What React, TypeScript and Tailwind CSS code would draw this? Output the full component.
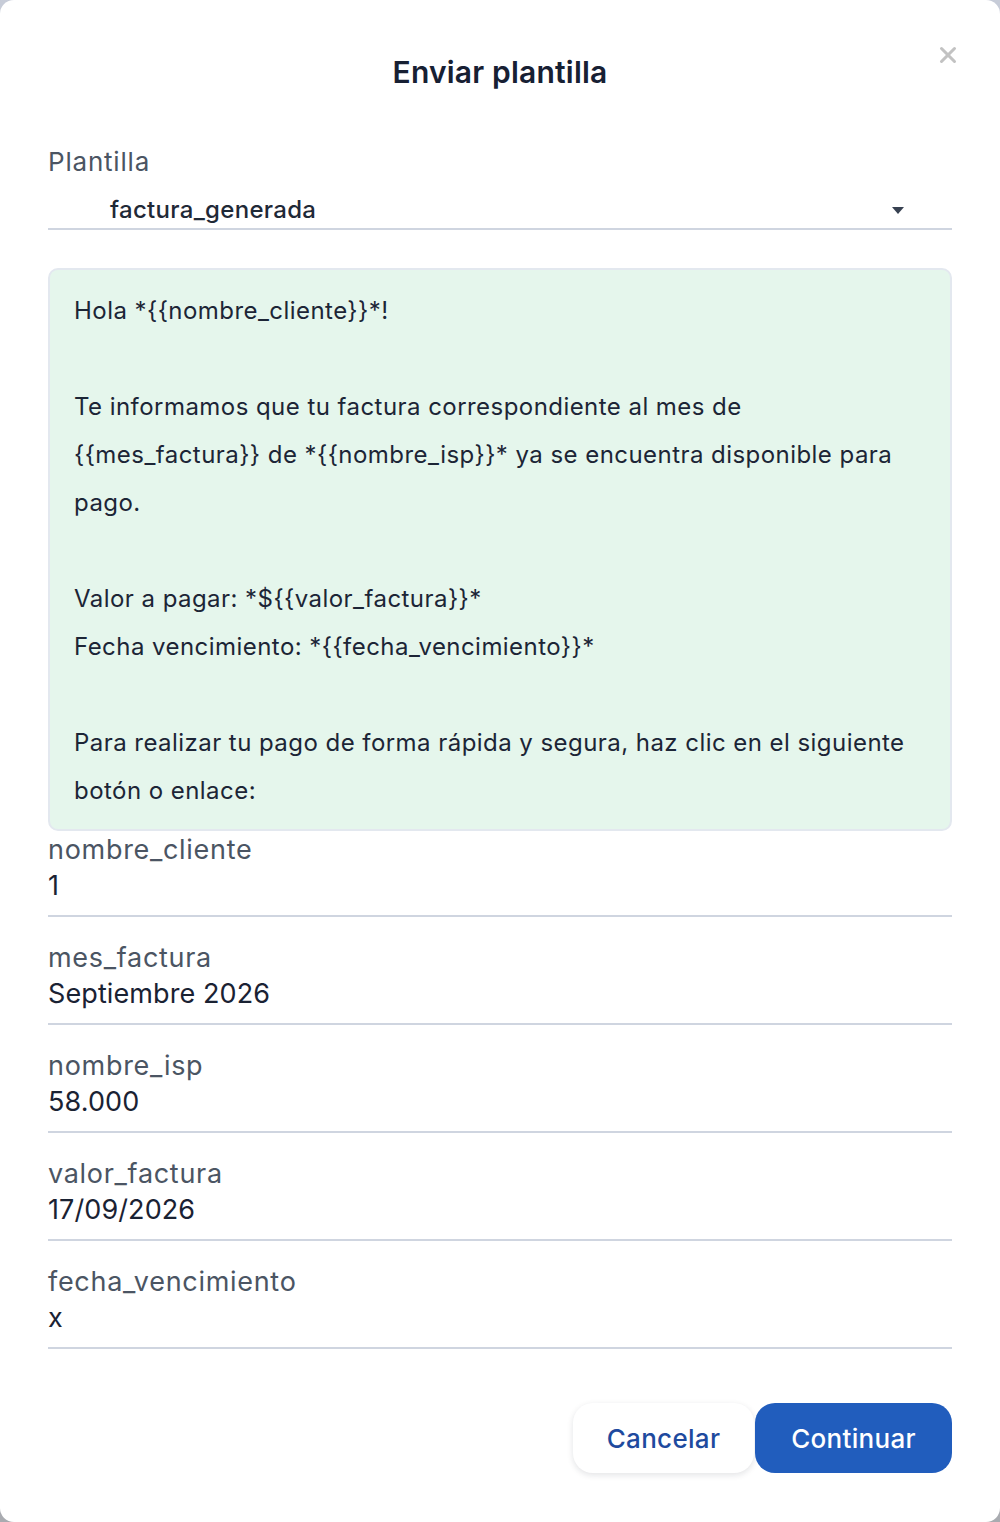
import { X } from "lucide-react";

const fields = [
  { label: "nombre_cliente", value: "1" },
  { label: "mes_factura", value: "Septiembre 2026" },
  { label: "nombre_isp", value: "58.000" },
  { label: "valor_factura", value: "17/09/2026" },
  { label: "fecha_vencimiento", value: "x" },
];

// preview lines, empty string = blank line
const preview = [
  "Hola *{{nombre_cliente}}*!",
  "",
  "Te informamos que tu factura correspondiente al mes de",
  "{{mes_factura}} de *{{nombre_isp}}* ya se encuentra disponible para",
  "pago.",
  "",
  "Valor a pagar: *${{valor_factura}}*",
  "Fecha vencimiento: *{{fecha_vencimiento}}*",
  "",
  "Para realizar tu pago de forma rápida y segura, haz clic en el siguiente",
  "botón o enlace:",
];

export default function App() {
  return (
    <div className="min-h-[1522px] bg-gradient-to-b from-[#c7ccd8] to-[#a9abb0] font-['Inter',sans-serif]">
      <div className="relative min-h-[1522px] rounded-[14px] bg-white px-12">
        {/* Header */}
        <div className="flex h-[144px] items-start justify-center pt-[52px]">
          <h1 className="text-[30px] font-semibold leading-10 tracking-[0.2px] text-[#172033]">
            Enviar plantilla
          </h1>
        </div>
        <button className="absolute right-[39px] top-[42px] text-[#c2c2c2]">
          <X className="h-[26px] w-[26px]" strokeWidth={2.8} />
        </button>

        {/* Template select */}
        <div className="text-[26px] leading-9 tracking-[0.8px] text-[#4b5563]">Plantilla</div>
        <div className="mt-[14px] flex h-[36px] items-center justify-between border-b-2 border-[#cfd5e0] pb-[2px] pl-[62px] pr-[48px]">
          <span className="text-[24px] font-medium tracking-[0.3px] text-[#1f2937]">factura_generada</span>
          <svg width="12" height="7" viewBox="0 0 12 7" className="fill-[#374151]">
            <path d="M0 0h12L6 7z" />
          </svg>
        </div>

        {/* Preview */}
        <div className="mt-[38px] h-[563px] overflow-hidden rounded-[10px] border-2 border-[#e3e8ef] bg-[#e5f6ec] px-6 pt-[17px]">
          {preview.map((line, i) => (
            <div key={i} className="h-12 whitespace-nowrap text-[24px] leading-[48px] tracking-[0.45px] text-[#1c2536]">
              {line}
            </div>
          ))}
        </div>

        {/* Variables */}
        <div>
          {fields.map((f, i) => (
            <div
              key={f.label}
              className={`border-b-2 border-[#cfd5e0] pb-[11px] ${i === 0 ? "mt-px" : "mt-[23px]"}`}
            >
              <div className="text-[27px] leading-9 tracking-[0.7px] text-[#4b5563]">{f.label}</div>
              <div className="text-[27px] leading-9 tracking-[0.1px] text-[#1a2233]">{f.value}</div>
            </div>
          ))}
        </div>

        {/* Actions */}
        <div className="mt-[54px] flex justify-end gap-px">
          <button className="h-[70px] w-[181px] rounded-[20px] bg-white text-[26px] font-medium tracking-[0.3px] text-[#1e4a9e] shadow-[0_2px_6px_rgba(15,23,42,0.12)]">
            Cancelar
          </button>
          <button className="h-[70px] w-[197px] rounded-[20px] bg-[#215dbd] text-[26px] font-medium tracking-[0.3px] text-white">
            Continuar
          </button>
        </div>
      </div>
    </div>
  );
}
